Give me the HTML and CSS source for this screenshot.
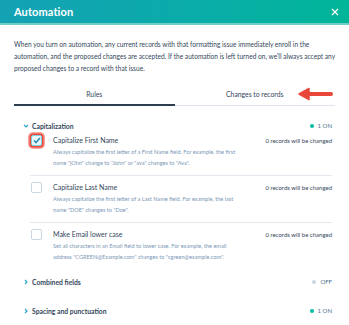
FILE: index.html
```html
<!DOCTYPE html>
<html>
<head>
<meta charset="utf-8">
<link rel="stylesheet" href="styles.css">
</head>
<body>
<div class="modal">
  <div class="header">
    <span class="title">Automation</span>
    <svg class="close" width="8" height="8" viewBox="0 0 8 8"><path d="M1 1L7 7M7 1L1 7" stroke="#fff" stroke-width="1.3"/></svg>
  </div>
  <div class="body">
    <p class="intro">When you turn on automation, any current records with that formatting issue immediately enroll in the automation, and the proposed changes are accepted. If the automation is left turned on, we'll always accept any proposed changes to a record with that issue.</p>
    <div class="tabs">
      <div class="tab active">Rules</div>
      <div class="tab">Changes to records
        <svg class="arrow" width="36" height="14" viewBox="0 0 36 14"><path d="M34 7H10" stroke="#e8473a" stroke-width="4" stroke-linecap="round"/><path d="M2 7L12 1.5V12.5Z" fill="#e8473a" stroke="#e8473a" stroke-width="1.5" stroke-linejoin="round"/></svg>
      </div>
    </div>

    <div class="group">
      <div class="group-head">
        <svg class="chev" width="6" height="6" viewBox="0 0 6 6"><path d="M1 2L3 4L5 2" stroke="#2aa7c9" stroke-width="1.2" fill="none"/></svg>
        <span class="group-name">Capitalization</span>
        <span class="status"><i class="dot on"></i>1 ON</span>
      </div>
      <div class="rule">
        <span class="cb checked highlight"><svg width="8" height="7" viewBox="0 0 8 7"><path d="M1 3.5L3 5.5L7 1" stroke="#2f8fb4" stroke-width="1.6" fill="none"/></svg></span>
        <div class="rule-text">
          <div class="rule-title">Capitalize First Name</div>
          <div class="rule-desc">Always capitalize the first letter of a First Name field. For example, the first name "jOhn" change to "John" or "ava" changes to "Ava".</div>
        </div>
        <div class="count">0 records will be changed</div>
      </div>
      <div class="rule">
        <span class="cb"></span>
        <div class="rule-text">
          <div class="rule-title">Capitalize Last Name</div>
          <div class="rule-desc">Always capitalize the first letter of a Last Name field. For example, the last name "DOE" changes to "Doe".</div>
        </div>
        <div class="count">0 records will be changed</div>
      </div>
      <div class="rule last">
        <span class="cb"></span>
        <div class="rule-text">
          <div class="rule-title">Make Email lower case</div>
          <div class="rule-desc">Set all characters in an Email field to lower case. For example, the email address "CGREEN@Example.com" changes to "cgreen@example.com".</div>
        </div>
        <div class="count">0 records will be changed</div>
      </div>
    </div>

    <div class="group">
      <div class="group-head">
        <svg class="chev" width="6" height="6" viewBox="0 0 6 6"><path d="M2 1L4 3L2 5" stroke="#2aa7c9" stroke-width="1.2" fill="none"/></svg>
        <span class="group-name">Combined fields</span>
        <span class="status"><i class="dot off"></i>OFF</span>
      </div>
    </div>
    <div class="group">
      <div class="group-head">
        <svg class="chev" width="6" height="6" viewBox="0 0 6 6"><path d="M2 1L4 3L2 5" stroke="#2aa7c9" stroke-width="1.2" fill="none"/></svg>
        <span class="group-name">Spacing and punctuation</span>
        <span class="status"><i class="dot on"></i>1 ON</span>
      </div>
    </div>
  </div>
</div>
</body>
</html>
```
FILE: styles.css
```css
* { box-sizing: border-box; }
html, body { margin: 0; padding: 0; background: #fff; }
body {
  width: 349px;
  height: 325px;
  overflow: hidden;
  font-family: Lato, "Open Sans", sans-serif;
  color: #33475b;
}
.modal { width: 349px; }
.header {
  height: 25px;
  background: linear-gradient(90deg, #14a2b5 0%, #0aaca9 55%, #00b598 100%);
  border-bottom: 2px solid #6fcfc6;
  display: flex;
  align-items: center;
  justify-content: space-between;
  padding: 0 10px 0 14px;
}
.title { color: #fff; font-weight: 700; font-size: 11px; letter-spacing: 0.1px; }
.close { display: block; }
.body { padding: 0 14px 0 14px; }
.intro {
  margin: 13px 0 0 0;
  font-size: 6.6px;
  line-height: 12px;
  color: #33475b;
}
.tabs {
  display: flex;
  margin-top: 13px;
  border-bottom: 1px solid #dfe3eb;
}
.tab {
  flex: 1;
  text-align: center;
  font-size: 6.8px;
  height: 17px;
  line-height: 14px;
  position: relative;
  color: #33475b;
}
.tab.active { border-bottom: 2.5px solid #2d3e50; margin-bottom: -1px; height: 18.5px; }
.arrow { position: absolute; left: 122px; top: 0px; }
.group { padding: 0 3px 0 9px; }
.group-head {
  display: flex;
  align-items: center;
  height: 18px;
  margin-top: 11px;
}
.chev { margin-right: 3px; }
.group-name { font-weight: 700; font-size: 6.8px; color: #33475b; }
.status { margin-left: auto; font-size: 6px; display: flex; align-items: center; color: #516f90; }
.dot { display: inline-block; width: 4px; height: 4px; border-radius: 50%; margin-right: 4px; }
.dot.on { background: #00bda5; }
.dot.off { background: #cbd6e2; }
.rule {
  display: flex;
  align-items: flex-start;
  margin-left: 7px;
  padding: 0 0 7px 0;
  border-bottom: 1px solid #e5e9ef;
}
.rule + .rule { padding-top: 6px; }
.rule.last { border-bottom: none; padding-bottom: 0; }
.cb {
  flex: none;
  width: 11px;
  height: 11px;
  border: 1px solid #cbd6e2;
  border-radius: 2px;
  background: #fff;
  margin: 0 11px 0 1px;
  display: flex;
  align-items: center;
  justify-content: center;
}
.rule:first-of-type .cb { margin-top: 1px; }
.cb.checked { background: #e5f5f8; border-color: #7fd1de; }
.cb.highlight { box-shadow: 0 0 0 1.5px #e8473a, 0 0 0 3px #f5a89f; }
.rule-text { flex: 1; }
.rule-title { font-size: 7px; line-height: 11px; color: #33475b; }
.rule-desc { font-size: 5.6px; line-height: 11px; color: #7c98b6; width: 186px; }
.count { font-size: 6px; line-height: 11px; color: #33475b; white-space: nowrap; }
```
